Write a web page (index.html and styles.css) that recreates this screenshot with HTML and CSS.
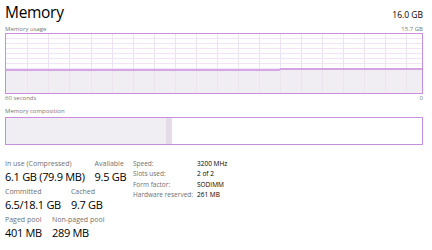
FILE: index.html
```html
<!DOCTYPE html>
<html lang="en">
<head>
    <meta charset="UTF-8">
    <title>Memory</title>
    <link rel="stylesheet" href="styles.css">
</head>
<body>
    <div class="panel">
        <div class="header">
            <h1>Memory</h1>
            <span class="total">16.0 GB</span>
        </div>

        <div class="caption">
            <span>Memory usage</span>
            <span>15.7 GB</span>
        </div>
        <!-- usage graph -->
        <svg class="graph" width="418" height="61" viewBox="0 0 418 61">
            <g stroke="#f1e4f6" stroke-width="1">
                <line x1="0" y1="5.5" x2="418" y2="5.5"/>
                <line x1="0" y1="10.5" x2="418" y2="10.5"/>
                <line x1="0" y1="15.5" x2="418" y2="15.5"/>
                <line x1="0" y1="20.5" x2="418" y2="20.5"/>
                <line x1="0" y1="25.5" x2="418" y2="25.5"/>
                <line x1="0" y1="30.5" x2="418" y2="30.5"/>
                <line x1="0" y1="35.5" x2="418" y2="35.5"/>
                <line x1="0" y1="40.5" x2="418" y2="40.5"/>
                <line x1="0" y1="45.5" x2="418" y2="45.5"/>
                <line x1="0" y1="50.5" x2="418" y2="50.5"/>
                <line x1="0" y1="55.5" x2="418" y2="55.5"/>
            </g>
            <polygon points="0,37 274,37 276,36 418,36 418,61 0,61" fill="#f1eef3"/>
            <g stroke="#ece2f0" stroke-width="1">
                <line x1="22.5" y1="0" x2="22.5" y2="61"/>
                <line x1="43.5" y1="0" x2="43.5" y2="61"/>
                <line x1="64.5" y1="0" x2="64.5" y2="61"/>
                <line x1="86.5" y1="0" x2="86.5" y2="61"/>
                <line x1="107.5" y1="0" x2="107.5" y2="61"/>
                <line x1="128.5" y1="0" x2="128.5" y2="61"/>
                <line x1="149.5" y1="0" x2="149.5" y2="61"/>
                <line x1="170.5" y1="0" x2="170.5" y2="61"/>
                <line x1="191.5" y1="0" x2="191.5" y2="61"/>
                <line x1="212.5" y1="0" x2="212.5" y2="61"/>
                <line x1="233.5" y1="0" x2="233.5" y2="61"/>
                <line x1="254.5" y1="0" x2="254.5" y2="61"/>
                <line x1="275.5" y1="0" x2="275.5" y2="61"/>
                <line x1="296.5" y1="0" x2="296.5" y2="61"/>
                <line x1="317.5" y1="0" x2="317.5" y2="61"/>
                <line x1="338.5" y1="0" x2="338.5" y2="61"/>
                <line x1="359.5" y1="0" x2="359.5" y2="61"/>
                <line x1="380.5" y1="0" x2="380.5" y2="61"/>
                <line x1="401.5" y1="0" x2="401.5" y2="61"/>
            </g>
            <polyline points="0,37 274,37 276,36 418,36" fill="none" stroke="#c98fde" stroke-width="1.3"/>
            <rect x="0.5" y="0.5" width="417" height="60" fill="none" stroke="#c98fde" stroke-width="1"/>
        </svg>
        <div class="caption">
            <span>60 seconds</span>
            <span>0</span>
        </div>

        <div class="caption comp-title">Memory composition</div>
        <div class="composition">
            <div class="used"></div>
            <div class="modified"></div>
        </div>

        <div class="stats">
            <div class="left">
                <div class="row">
                    <div class="stat">
                        <div class="label">In use (Compressed)</div>
                        <div class="value">6.1 GB (79.9 MB)</div>
                    </div>
                    <div class="stat">
                        <div class="label">Available</div>
                        <div class="value">9.5 GB</div>
                    </div>
                </div>
                <div class="row">
                    <div class="stat">
                        <div class="label">Committed</div>
                        <div class="value">6.5/18.1 GB</div>
                    </div>
                    <div class="stat">
                        <div class="label">Cached</div>
                        <div class="value">9.7 GB</div>
                    </div>
                </div>
                <div class="row">
                    <div class="stat">
                        <div class="label">Paged pool</div>
                        <div class="value">401 MB</div>
                    </div>
                    <div class="stat">
                        <div class="label">Non-paged pool</div>
                        <div class="value">289 MB</div>
                    </div>
                </div>
            </div>

            <table class="info">
                <tr><td class="key">Speed:</td><td>3200 MHz</td></tr>
                <tr><td class="key">Slots used:</td><td>2 of 2</td></tr>
                <tr><td class="key">Form factor:</td><td>SODIMM</td></tr>
                <tr><td class="key">Hardware reserved:</td><td>261 MB</td></tr>
            </table>
        </div>
    </div>
</body>
</html>
```

FILE: styles.css
```css
/* General styling */
body {
    margin: 0;
    background: #fff;
    font-family: "Open Sans", "Noto Sans", sans-serif;
    color: #000;
}

.panel {
    width: 418px;
    padding: 0 9px 0 5px;
}

.header {
    display: flex;
    justify-content: space-between;
    align-items: baseline;
    height: 25px;
}

h1 {
    margin: 0;
    font-size: 15.5px;
    font-weight: 400;
    line-height: 25px;
    letter-spacing: -0.3px;
}

.total {
    font-size: 8.5px;
}

.caption {
    display: flex;
    justify-content: space-between;
    font-size: 6px;
    color: #777;
    height: 8px;
    line-height: 8px;
}

.graph {
    display: block;
}

.comp-title {
    margin-top: 5px;
    height: 10px;
}

/* Composition bar */
.composition {
    display: flex;
    height: 26px;
    border: 1px solid #c98fde;
}

.composition .used {
    width: 160px;
    background: #f1eef3;
}

.composition .modified {
    width: 6px;
    background: #e5dbe9;
}

/* Stats */
.stats {
    display: flex;
    align-items: flex-start;
    margin-top: 14px;
    white-space: nowrap;
}

.left {
    flex: none;
    width: 128px;
}

.row {
    display: flex;
    gap: 10px;
    margin-bottom: 3px;
}

.label {
    font-size: 7px;
    color: #707070;
    line-height: 10px;
}

.value {
    font-size: 11px;
    line-height: 15px;
    letter-spacing: -0.3px;
}

.info {
    border-collapse: collapse;
    font-size: 6.5px;
}

.info td {
    padding: 0;
    height: 10.3px;
    line-height: 10.3px;
}

.info .key {
    color: #707070;
    width: 64px;
    padding-right: 0;
}
```
